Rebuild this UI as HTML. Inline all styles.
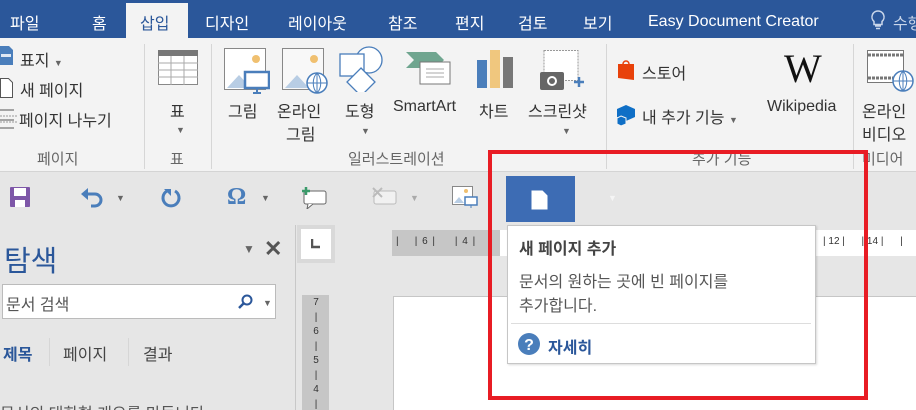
<!DOCTYPE html>
<html><head><meta charset="utf-8"><style>
*{margin:0;padding:0;box-sizing:border-box}
html,body{width:916px;height:410px;overflow:hidden}
body{background:#e6e6e6;font-family:"Liberation Sans","Noto Sans CJK KR",sans-serif;position:relative;color:#444}
.a{position:absolute;white-space:nowrap}
.tab{color:#fff;font-size:16px;top:10px}
.rb{font-size:16px;color:#333}
.gl{font-size:15px;color:#666;top:148px}
.sep{position:absolute;width:1px;background:#d6d6d6;top:44px;height:125px}
.car{font-size:9px;color:#666}
</style></head><body>
<div class="a" style="left:0;top:0;width:916px;height:38px;background:#2b579a"></div>
<div class="a" style="left:126px;top:3px;width:62px;height:36px;background:#f3f3f3"></div>
<div class="a tab" style="left:10px">파일</div>
<div class="a tab" style="left:92px">홈</div>
<div class="a tab" style="left:140px;color:#2b579a">삽입</div>
<div class="a tab" style="left:205px">디자인</div>
<div class="a tab" style="left:288px">레이아웃</div>
<div class="a tab" style="left:388px">참조</div>
<div class="a tab" style="left:455px">편지</div>
<div class="a tab" style="left:518px">검토</div>
<div class="a tab" style="left:583px">보기</div>
<div class="a tab" style="left:648px;top:13px">Easy Document Creator</div>
<svg class="a" style="left:870px;top:10px" width="16" height="20"><path d="M8 1a6 6 0 0 0-4 10.5v3h8v-3A6 6 0 0 0 8 1zM5 16h6M6 18.5h4" fill="none" stroke="#c9d6ea" stroke-width="1.5"/></svg>
<div class="a tab" style="left:893px;color:#c9d6ea">수행</div>
<div class="a" style="left:0;top:38px;width:916px;height:134px;background:#f3f3f3;border-bottom:1px solid #d4d4d4"></div>
<div class="sep" style="left:144px"></div><div class="sep" style="left:211px"></div><div class="sep" style="left:606px"></div><div class="sep" style="left:853px"></div>
<svg class="a" style="left:0;top:46px" width="14" height="20"><path d="M0 0h9l4 4v15H0z" fill="#4a7ebb"/><rect x="1" y="8" width="10" height="3" fill="#dfe8f3"/></svg>
<div class="a rb" style="left:20px;top:47px">표지 <span class="car">▼</span></div>
<svg class="a" style="left:0;top:78px" width="14" height="20"><path d="M0.5 .5h8l4 4v15H.5z" fill="#fff" stroke="#555"/></svg>
<div class="a rb" style="left:20px;top:77px">새 페이지</div>
<svg class="a" style="left:0;top:108px" width="18" height="22"><path d="M0 2h14M0 12h14M0 20h14" stroke="#555"/><path d="M0 8h18M0 14h18" stroke="#999" stroke-dasharray="2 1"/></svg>
<div class="a rb" style="left:19px;top:107px">페이지 나누기</div>
<div class="a gl" style="left:37px">페이지</div>
<svg class="a" style="left:158px;top:50px" width="40" height="36"><rect x=".5" y=".5" width="39" height="34" fill="#fff" stroke="#888"/><rect x="0" y="0" width="40" height="6" fill="#777"/><path d="M0 13h40M0 20h40M0 27h40M13 6v29M26 6v29" stroke="#aaa"/></svg>
<div class="a rb" style="left:170px;top:98px">표</div>
<div class="a car" style="left:176px;top:125px">▼</div>
<div class="a gl" style="left:170px">표</div>
<svg class="a" style="left:224px;top:48px" width="46" height="46"><rect x=".5" y=".5" width="41" height="41" fill="#fff" stroke="#888"/><circle cx="32" cy="11" r="4" fill="#f0c070"/><path d="M3 40l12-13 12 13z" fill="#b8cde4"/><rect x="21" y="24" width="24" height="16" fill="#fff" stroke="#4a7ebb" stroke-width="2.5"/><path d="M33 40v4M29 45h8" stroke="#4a7ebb" stroke-width="2"/></svg>
<svg class="a" style="left:282px;top:48px" width="46" height="46"><rect x=".5" y=".5" width="41" height="41" fill="#f8f8f8" stroke="#888"/><circle cx="32" cy="11" r="4" fill="#f0c070"/><path d="M3 40l12-13 12 13z" fill="#b8cde4"/><circle cx="35" cy="35" r="10" fill="#fff" stroke="#4a7ebb" stroke-width="1.5"/><path d="M25 35h20M35 25v20M35 25c-5 5-5 15 0 20M35 25c5 5 5 15 0 20" fill="none" stroke="#4a7ebb"/></svg>
<svg class="a" style="left:339px;top:46px" width="46" height="46"><circle cx="30" cy="14" r="13" fill="#fff" stroke="#4a7ebb" stroke-width="1.3"/><rect x="1" y="8" width="24" height="22" fill="#fff" stroke="#4a7ebb" stroke-width="1.3"/><path d="M22 22l14 14-14 14-14-14z" fill="#fff" stroke="#4a7ebb" stroke-width="1.3"/></svg>
<svg class="a" style="left:406px;top:50px" width="46" height="38"><path d="M0 2h30l8 8-8 8H0l8-8z" fill="#6fa58f"/><rect x="14" y="12" width="30" height="22" fill="#fff" stroke="#777"/><path d="M20 19h18M20 23h18M20 27h18" stroke="#aaa"/></svg>
<svg class="a" style="left:476px;top:48px" width="40" height="42"><rect x="1" y="12" width="10" height="28" fill="#4a7ebb"/><rect x="14" y="2" width="10" height="38" fill="#f0c77e"/><rect x="27" y="9" width="10" height="31" fill="#777"/></svg>
<svg class="a" style="left:540px;top:50px" width="46" height="42"><rect x="4" y=".5" width="34" height="30" fill="#fff" stroke="#999" stroke-dasharray="2 1"/><rect x="0" y="22" width="24" height="18" rx="2" fill="#666"/><circle cx="12" cy="31" r="5" fill="#fff"/><circle cx="12" cy="31" r="3" fill="#666"/><path d="M34 32h10M39 27v10" stroke="#4a7ebb" stroke-width="2.5"/></svg>
<div class="a rb" style="left:228px;top:98px">그림</div>
<div class="a rb" style="left:277px;top:98px">온라인</div>
<div class="a rb" style="left:286px;top:121px">그림</div>
<div class="a rb" style="left:345px;top:98px">도형</div>
<div class="a car" style="left:361px;top:126px">▼</div>
<div class="a rb" style="left:393px;top:98px">SmartArt</div>
<div class="a rb" style="left:479px;top:98px">차트</div>
<div class="a rb" style="left:528px;top:98px">스크린샷</div>
<div class="a car" style="left:562px;top:126px">▼</div>
<div class="a gl" style="left:348px">일러스트레이션</div>
<svg class="a" style="left:616px;top:58px" width="20" height="24"><path d="M7 6a3 3 0 0 1 6 0" fill="none" stroke="#e8410a" stroke-width="1.5"/><path d="M2 6h16v16l-16-2z" fill="#e8410a"/></svg>
<div class="a rb" style="left:642px;top:60px">스토어</div>
<svg class="a" style="left:616px;top:104px" width="22" height="22"><path d="M10 1l9 4v8l-9 4-9-4V5z" fill="#0f6fc6"/><path d="M5 12l5 2v6l-5 2-4-2v-6z" fill="#0f6fc6" stroke="#f3f3f3"/></svg>
<div class="a rb" style="left:642px;top:104px">내 추가 기능 <span class="car">▼</span></div>
<div class="a" style="left:784px;top:45px;font-family:'Liberation Serif',serif;font-size:40px;color:#111;letter-spacing:-3px">W</div>
<div class="a rb" style="left:767px;top:98px">Wikipedia</div>
<div class="a gl" style="left:692px">추가 기능</div>
<svg class="a" style="left:867px;top:50px" width="49" height="42"><rect x=".5" y=".5" width="36" height="32" fill="#fff" stroke="#777"/><path d="M1 5h36M1 28h36" stroke="#777" stroke-dasharray="3 1" stroke-width="3"/><circle cx="36" cy="31" r="10" fill="#fff" stroke="#4a7ebb" stroke-width="1.5"/><path d="M26 31h20M36 21v20M36 21c-5 5-5 15 0 20M36 21c5 5 5 15 0 20" fill="none" stroke="#4a7ebb"/></svg>
<div class="a rb" style="left:862px;top:98px">온라인</div>
<div class="a rb" style="left:862px;top:121px">비디오</div>
<div class="a gl" style="left:862px">미디어</div>
<svg class="a" style="left:10px;top:187px" width="20" height="20"><rect width="20" height="20" rx="1" fill="#7e57a8"/><rect x="4" y="1" width="12" height="8" fill="#fff"/><rect x="5" y="13" width="10" height="7" fill="#fff"/></svg>
<svg class="a" style="left:80px;top:186px" width="24" height="22"><path d="M5 8h10a6 6 0 0 1 0 12h-4" fill="none" stroke="#4a7ebb" stroke-width="3"/><path d="M1 8l7-6v12z" fill="#4a7ebb"/></svg>
<div class="a car" style="left:116px;top:193px">▼</div>
<svg class="a" style="left:160px;top:188px" width="22" height="22"><path d="M7 3a8 8 0 1 0 8 0" fill="none" stroke="#4a7ebb" stroke-width="3"/><path d="M4 1h7v7z" fill="#4a7ebb"/></svg>
<div class="a" style="left:227px;top:184px;font-size:24px;color:#4a7ebb;font-family:'Liberation Serif',serif;font-weight:bold">Ω</div>
<div class="a car" style="left:261px;top:193px">▼</div>
<svg class="a" style="left:302px;top:187px" width="26" height="22"><rect x="2" y="4" width="22" height="13" rx="2" fill="#fff" stroke="#666"/><path d="M6 17l-1 5 6-5" fill="#fff" stroke="#666"/><path d="M4 0v8M0 4h8" stroke="#3a9a6a" stroke-width="2.5"/></svg>
<svg class="a" style="left:372px;top:187px" width="26" height="22" opacity=".45"><rect x="2" y="4" width="22" height="13" rx="2" fill="#fff" stroke="#888"/><path d="M1 1l9 9M10 1l-9 9" stroke="#888" stroke-width="2"/></svg>
<div class="a car" style="left:410px;top:193px;color:#aaa">▼</div>
<svg class="a" style="left:452px;top:186px" width="26" height="24"><rect x=".5" y=".5" width="20" height="18" fill="#fff" stroke="#888"/><path d="M2 17l5-6 5 6z" fill="#b8cde4"/><circle cx="14" cy="5" r="2" fill="#f0c070"/><rect x="13" y="11" width="12" height="8" fill="#fff" stroke="#4a7ebb" stroke-width="1.5"/><path d="M19 19v3" stroke="#4a7ebb"/></svg>
<div class="a" style="left:506px;top:176px;width:69px;height:46px;background:#3d6cb4"></div>
<svg class="a" style="left:531px;top:190px" width="18" height="20"><path d="M.5.5h11l5 5v14H.5z" fill="#fff"/></svg>
<div class="a car" style="left:608px;top:193px;color:#f5f5f5">▼</div>
<div class="a" style="left:295px;top:225px;width:1px;height:185px;background:#c8c8c8"></div>
<div class="a" style="left:4px;top:238px;font-size:29px;color:#2b579a">탐색</div>
<div class="a" style="left:243px;top:242px;font-size:12px;color:#666">▼</div>
<div class="a" style="left:264px;top:236px;font-size:22px;color:#555;font-weight:bold">✕</div>
<div class="a" style="left:2px;top:284px;width:274px;height:35px;background:#fff;border:1px solid #bbb"></div>
<div class="a" style="left:6px;top:291px;font-size:16px;color:#555">문서 검색</div>
<svg class="a" style="left:238px;top:294px" width="16" height="16"><circle cx="9" cy="6" r="4.5" fill="none" stroke="#2b579a" stroke-width="2"/><path d="M6 9l-5 5" stroke="#2b579a" stroke-width="2.5"/></svg>
<div class="a car" style="left:263px;top:298px">▼</div>
<div class="a" style="left:3px;top:341px;font-size:16px;color:#2b579a;font-weight:bold">제목</div>
<div class="a" style="left:49px;top:338px;width:1px;height:28px;background:#d6d6d6"></div>
<div class="a" style="left:63px;top:341px;font-size:16px;color:#444">페이지</div>
<div class="a" style="left:128px;top:338px;width:1px;height:28px;background:#d6d6d6"></div>
<div class="a" style="left:143px;top:341px;font-size:16px;color:#444">결과</div>
<div class="a" style="left:0;top:400px;font-size:16px;color:#555">문서의 대화형 개요를 만듭니다</div>
<div class="a" style="left:297px;top:225px;width:38px;height:38px;background:#d9d9d9"></div>
<div class="a" style="left:301px;top:229px;width:30px;height:30px;background:#fff"></div>
<svg class="a" style="left:311px;top:239px" width="10" height="10"><path d="M1 0v8h8" fill="none" stroke="#555" stroke-width="2.5"/></svg>
<div class="a" style="left:392px;top:230px;width:524px;height:26px;background:#c6c6c6"></div>
<div class="a" style="left:500px;top:230px;width:416px;height:26px;background:#fff"></div>
<div class="a" style="left:396px;top:236px;font-size:10px;color:#333;letter-spacing:1px">|&nbsp;&nbsp;&nbsp;&nbsp;| 6 |&nbsp;&nbsp;&nbsp;&nbsp;&nbsp;| 4 |</div>
<div class="a" style="left:823px;top:236px;font-size:10px;color:#333">| 12 |&nbsp;&nbsp;&nbsp;&nbsp;&nbsp;&nbsp;| 14 |&nbsp;&nbsp;&nbsp;&nbsp;&nbsp;&nbsp;|</div>
<div class="a" style="left:302px;top:295px;width:27px;height:115px;background:#c6c6c6"></div>
<div class="a" style="left:312px;top:296px;font-size:10px;color:#333;line-height:14.5px;width:8px;white-space:normal;text-align:center">7<br>|<br>6<br>|<br>5<br>|<br>4<br>|</div>
<div class="a" style="left:393px;top:296px;width:523px;height:114px;background:#fff;border-left:1px solid #c6c6c6;border-top:1px solid #c6c6c6"></div>
<div class="a" style="left:507px;top:225px;width:309px;height:139px;background:#fff;border:1px solid #c6c6c6;box-shadow:1px 1px 2px rgba(0,0,0,.15)"></div>
<div class="a" style="left:519px;top:235px;font-size:16px;font-weight:bold;color:#444">새 페이지 추가</div>
<div class="a" style="left:519px;top:271px;font-size:16px;color:#555;line-height:24px">문서의 원하는 곳에 빈 페이지를<br>추가합니다.</div>
<div class="a" style="left:511px;top:323px;width:300px;height:1px;background:#ddd"></div>
<svg class="a" style="left:518px;top:333px" width="22" height="22"><circle cx="11" cy="11" r="11" fill="#4a7ebb"/><text x="11" y="17" font-size="16" font-weight="bold" fill="#fff" text-anchor="middle" font-family="Liberation Sans">?</text></svg>
<div class="a" style="left:548px;top:334px;font-size:16px;font-weight:bold;color:#2b579a">자세히</div>
<div class="a" style="left:488px;top:150px;width:380px;height:250px;border:4px solid #e81c24"></div>
</body></html>
